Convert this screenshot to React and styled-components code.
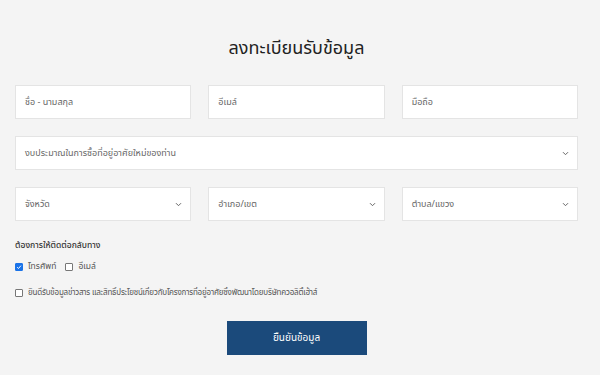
import styled, { createGlobalStyle } from 'styled-components';

const GlobalStyle = createGlobalStyle`
  html, body {
    margin: 0;
    padding: 0;
    background: #f4f4f4;
  }
  body {
    font-family: "Noto Sans", "Noto Sans Thai", "Liberation Sans", sans-serif;
    color: #333;
  }
`;

function Chevron() {
  return (
    <svg width="7" height="5" viewBox="0 0 7 5">
      <path d="M1 1.2l2.5 2.5 2.5-2.5" fill="none" stroke="#666" strokeWidth="1" />
    </svg>
  );
}

function Check({ checked }) {
  return (
    <Box $checked={checked}>
      {checked && (
        <svg width="8" height="8" viewBox="0 0 8 8">
          <path d="M1.5 4.2l1.8 1.8 3.3-3.8" fill="none" stroke="#fff" strokeWidth="1.3" />
        </svg>
      )}
    </Box>
  );
}

export default function App() {
  return (
    <>
      <GlobalStyle />
      <Page>
        <Title>ลงทะเบียนรับข้อมูล</Title>
        <Form>
          <Row $cols={3}>
            <Field>ชื่อ - นามสกุล</Field>
            <Field>อีเมล์</Field>
            <Field>มือถือ</Field>
          </Row>
          <Row $cols={1}>
            <Field>
              งบประมาณในการซื้อที่อยู่อาศัยใหม่ของท่าน
              <Chevron />
            </Field>
          </Row>
          <Row $cols={3}>
            <Field>
              จังหวัด
              <Chevron />
            </Field>
            <Field>
              อำเภอ/เขต
              <Chevron />
            </Field>
            <Field>
              ตำบล/แขวง
              <Chevron />
            </Field>
          </Row>
        </Form>
        <Label>ต้องการให้ติดต่อกลับทาง</Label>
        <Options>
          <Option>
            <Check checked />
            โทรศัพท์
          </Option>
          <Option>
            <Check />
            อีเมล์
          </Option>
        </Options>
        <Consent>
          <Check />
          ยินดีรับข้อมูลข่าวสาร และสิทธิ์ประโยชน์เกี่ยวกับโครงการที่อยู่อาศัยซึ่งพัฒนาโดยบริษัทควอลิตี้เฮ้าส์
        </Consent>
        <ButtonRow>
          <Submit>ยืนยันข้อมูล</Submit>
        </ButtonRow>
      </Page>
    </>
  );
}

const Page = styled.div`
  width: 563px;
  height: 375px;
  box-sizing: border-box;
  margin: 0 0 0 15px;
  padding-top: 33px;
`;

const Title = styled.h1`
  margin: 0 0 24px;
  text-align: center;
  font-size: 18px;
  font-weight: 400;
  color: #222;
  line-height: 28px;
`;

const Form = styled.div`
  display: flex;
  flex-direction: column;
  gap: 17px;
`;

const Row = styled.div`
  display: grid;
  grid-template-columns: repeat(${(p) => p.$cols}, 1fr);
  gap: 17px;
`;

const Field = styled.div`
  height: 34px;
  box-sizing: border-box;
  background: #fff;
  border: 1px solid #e4e4e4;
  padding: 0 8px 0 9px;
  display: flex;
  align-items: center;
  justify-content: space-between;
  font-size: 9px;
  color: #666;
`;

const Label = styled.div`
  margin-top: 18px;
  font-size: 8.5px;
  color: #333;
  font-weight: 500;
`;

const Options = styled.div`
  display: flex;
  gap: 9px;
  margin-top: 8px;
`;

const Option = styled.label`
  display: flex;
  align-items: center;
  gap: 5px;
  font-size: 8.5px;
  color: #555;
`;

const Box = styled.span`
  width: 8px;
  height: 8px;
  box-sizing: border-box;
  border-radius: 1px;
  display: inline-flex;
  align-items: center;
  justify-content: center;
  background: ${(p) => (p.$checked ? '#1a73e8' : '#fff')};
  border: 1px solid ${(p) => (p.$checked ? '#1a73e8' : '#777')};
`;

const Consent = styled(Option)`
  margin-top: 13px;
  font-size: 8px;
  letter-spacing: -0.2px;
`;

const ButtonRow = styled.div`
  display: flex;
  justify-content: center;
  margin-top: 22px;
`;

const Submit = styled.button`
  width: 140px;
  height: 34px;
  border: none;
  background: #1b4a7b;
  color: #fff;
  font-family: inherit;
  font-size: 10px;
`;
